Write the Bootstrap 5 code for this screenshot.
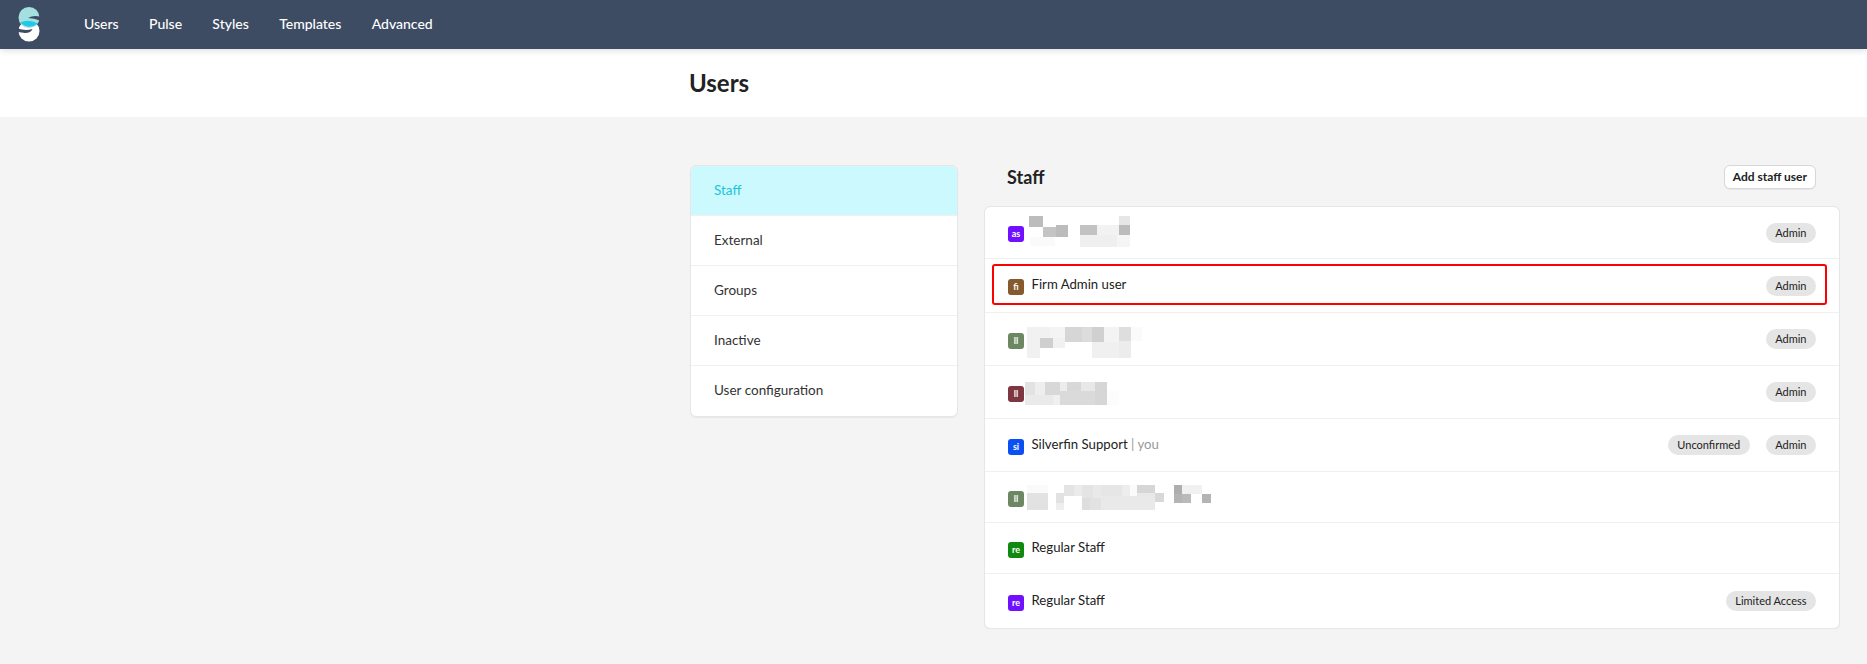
<!DOCTYPE html>
<html lang="en">
<head>
  <meta charset="UTF-8">
  <title>Users</title>
  <meta name="viewport" content="width=device-width, initial-scale=1">
  <link href="https://cdn.jsdelivr.net/npm/bootstrap@5.3.2/dist/css/bootstrap.min.css" rel="stylesheet">
  <style>
    body { font-family: Lato, "Liberation Sans", sans-serif; font-size: 14px; background: #f4f4f4; color: #222; }
    .top-bar { background: #3d4c63; height: 49px; padding: 0 0 0 18px; box-shadow: 0 2px 6px rgba(0,0,0,.12); position: relative; justify-content: flex-start; }
    .top-bar .navbar-brand { margin: 0 44px 0 0; padding: 0; display: flex; }
    .top-links { gap: 30.300px; flex-direction: row; margin-top: -2px; }
    .top-links .nav-link { color: #fff; font-size: 14px; font-weight: 500; padding: 0; }
    .page-head { background: #fff; height: 68px; padding-left: 689px; display: flex; align-items: center; }
    .page-head h1 { font-size: 24px; font-weight: 700; margin: 0; color: #222; }
    .page-body { padding: 48px 27px 0 690px; display: flex; gap: 26px; align-items: flex-start; }
    .side-menu { width: 268px; flex: none; border-radius: 6px; border: 1px solid #e6e6e6; box-shadow: 0 1px 1px rgba(0,0,0,.05); }
    .side-menu .list-group-item { height: 50px; padding: 0 23px 1px; display: flex; align-items: center; font-size: 13.500px; color: #333; border: 0; border-bottom: 1px solid #f0f0f0; background: #fff; }
    .side-menu .list-group-item:last-child { border-bottom: 0; }
    .side-menu .list-group-item.active { background: #ccf9fd; color: #1cc4dc; }
    .staff-col { flex: 1; min-width: 0; }
    .staff-head { height: 41px; padding: 0 24px 0 23px; display: flex; justify-content: space-between; align-items: flex-start; }
    .staff-head h2 { font-size: 18px; font-weight: 700; margin: 0; line-height: 24px; color: #222; }
    .add-btn { font-size: 12px; font-weight: 700; color: #222; background: #fff; border: 1px solid #d8d8d8; border-radius: 6px; padding: 0 8px; height: 24px; line-height: 22px; box-shadow: 0 1px 1px rgba(0,0,0,.06); }
    .staff-list { border: 1px solid #e6e6e6; border-radius: 6px; box-shadow: 0 1px 1px rgba(0,0,0,.05); }
    .staff-row { position: relative; display: flex; align-items: center; padding: 0 23px; height: 53px; border: 0; border-bottom: 1px solid #f0f0f0; font-size: 13.200px; color: #222; }
    .staff-row:last-child { border-bottom: 0; }
    .row-short { height: 51px; }
    .row-first { height: 52px; }
    .row-tall { height: 54px; }
    .row-last { height: 54px; }
    .avatar-tile { width: 16px; height: 16px; border-radius: 3px; color: #fff; font-size: 9px; font-weight: 700; line-height: 16px; text-align: center; margin-top: 3px; margin-right: 8px; flex: none; }
    .user-name { margin-top: -1px; margin-left: -.5px; }
    .you-note { color: #999; }
    .role-pill { background: #e5e5e5; color: #222; font-size: 11px; font-weight: 400; border-radius: 10px; height: 20px; line-height: 20px; padding: 0 9.500px; }
    .pill-set { margin-left: auto; gap: 16px; }
    .mosaic { display: block; flex: none; }
    .mosaic-as { margin: -3px 0 0 -3px; }
    .mosaic-l1 { margin: 6px 0 0 -5px; }
    .mosaic-l2 { margin: 2px 0 0 -7px; }
    .mosaic-l3 { margin: 0 0 0 -5px; }
    .marker-box { position: absolute; left: 7px; right: 12px; top: 5px; height: 41px; border: 2px solid #f00; border-radius: 3px; }
  </style>
</head>
<body>

<nav class="navbar top-bar">
  <a class="navbar-brand" href="#">
    <svg width="22" height="35" viewBox="0 0 22 35">
      <circle cx="11" cy="24" r="10.500" fill="#fff"/>
      <circle cx="11" cy="10.500" r="10.500" fill="#a4e0df"/>
      <path d="M2 15.500Q11 11.500 20 16.500Q11 23.500 2 15.500Z" fill="#22c8e8"/>
      <path d="M10 11Q15 8 22 9.500V13.500Q16 11 10 11Z" fill="#3d4c63"/>
      <path d="M0 21.500Q7 24 14.500 22Q13 26 7 26L0 25Z" fill="#3d4c63"/>
    </svg>
  </a>
  <ul class="navbar-nav top-links">
    <li class="nav-item"><a class="nav-link" href="#">Users</a></li>
    <li class="nav-item"><a class="nav-link" href="#">Pulse</a></li>
    <li class="nav-item"><a class="nav-link" href="#">Styles</a></li>
    <li class="nav-item"><a class="nav-link" href="#">Templates</a></li>
    <li class="nav-item"><a class="nav-link" href="#">Advanced</a></li>
  </ul>
</nav>

<header class="page-head">
  <h1>Users</h1>
</header>

<div class="page-body">
  <!-- left menu -->
  <div class="list-group side-menu">
    <a href="#" class="list-group-item active">Staff</a>
    <a href="#" class="list-group-item">External</a>
    <a href="#" class="list-group-item">Groups</a>
    <a href="#" class="list-group-item">Inactive</a>
    <a href="#" class="list-group-item">User configuration</a>
  </div>

  <!-- staff list -->
  <div class="staff-col">
    <div class="staff-head">
      <h2>Staff</h2>
      <button class="btn add-btn">Add staff user</button>
    </div>
    <div class="list-group staff-list">
      <div class="list-group-item staff-row row-first">
        <div class="avatar-tile" style="background:#6f10ff">as</div>
        <svg class="mosaic mosaic-as" width="101" height="31" viewBox="1029 215 101 31">
          <rect x="1029" y="215" width="14" height="11" fill="#bcbcbc"/>
          <rect x="1043" y="226" width="13" height="10" fill="#c4c4c4"/>
          <rect x="1056" y="224" width="12" height="12" fill="#bcbcbc"/>
          <rect x="1030" y="236" width="25" height="9" fill="#fafafa"/>
          <rect x="1080" y="224" width="17" height="10" fill="#c2c2c2"/>
          <rect x="1097" y="224" width="22" height="10" fill="#f2f2f2"/>
          <rect x="1080" y="234" width="37" height="12" fill="#efefef"/>
          <rect x="1119" y="215" width="11" height="9" fill="#e6e6e6"/>
          <rect x="1119" y="224" width="11" height="10" fill="#bcbcbc"/>
          <rect x="1117" y="234" width="13" height="12" fill="#f5f5f5"/>
        </svg>
        <div class="d-flex pill-set"><span class="badge role-pill">Admin</span></div>
      </div>
      <div class="list-group-item staff-row row-tall">
        <div class="avatar-tile" style="background:#845a2e">fi</div>
        <span class="user-name">Firm Admin user</span>
        <div class="d-flex pill-set"><span class="badge role-pill">Admin</span></div>
        <div class="marker-box"></div>
      </div>
      <div class="list-group-item staff-row">
        <div class="avatar-tile" style="background:#6d8763">ll</div>
        <svg class="mosaic mosaic-l1" width="115" height="31" viewBox="1027 326 115 31">
          <rect x="1027" y="326" width="23" height="11" fill="#f1f1f1"/>
          <rect x="1050" y="326" width="15" height="11" fill="#f4f4f4"/>
          <rect x="1027" y="337" width="13" height="20" fill="#f1f1f1"/>
          <rect x="1040" y="337" width="13" height="10" fill="#cfcfcf"/>
          <rect x="1053" y="337" width="12" height="10" fill="#f1f1f1"/>
          <rect x="1065" y="326" width="17" height="15" fill="#d6d6d6"/>
          <rect x="1082" y="326" width="10" height="15" fill="#dcdcdc"/>
          <rect x="1092" y="326" width="12" height="15" fill="#d0d0d0"/>
          <rect x="1104" y="326" width="15" height="15" fill="#f3f3f3"/>
          <rect x="1119" y="326" width="12" height="14" fill="#dedede"/>
          <rect x="1131" y="326" width="11" height="14" fill="#fbfbfb"/>
          <rect x="1092" y="341" width="27" height="16" fill="#f0f0f0"/>
          <rect x="1119" y="340" width="12" height="17" fill="#ececec"/>
        </svg>
        <div class="d-flex pill-set"><span class="badge role-pill">Admin</span></div>
      </div>
      <div class="list-group-item staff-row">
        <div class="avatar-tile" style="background:#7e3640">ll</div>
        <svg class="mosaic mosaic-l2" width="94" height="23" viewBox="1025 381 94 23">
          <rect x="1025" y="381" width="10" height="13" fill="#e2e2e2"/>
          <rect x="1035" y="381" width="10" height="13" fill="#eeeeee"/>
          <rect x="1045" y="381" width="15" height="13" fill="#d8d8d8"/>
          <rect x="1060" y="381" width="7" height="9" fill="#ececec"/>
          <rect x="1067" y="381" width="14" height="9" fill="#d8d8d8"/>
          <rect x="1081" y="381" width="14" height="9" fill="#e8e8e8"/>
          <rect x="1095" y="381" width="12" height="23" fill="#d6d6d6"/>
          <rect x="1025" y="394" width="28" height="10" fill="#eaeaea"/>
          <rect x="1053" y="394" width="7" height="10" fill="#f0f0f0"/>
          <rect x="1060" y="390" width="35" height="14" fill="#dadada"/>
          <rect x="1107" y="390" width="12" height="14" fill="#fcfcfc"/>
        </svg>
        <div class="d-flex pill-set"><span class="badge role-pill">Admin</span></div>
      </div>
      <div class="list-group-item staff-row">
        <div class="avatar-tile" style="background:#0b50f5">si</div>
        <span class="user-name">Silverfin Support <span class="you-note">| you</span></span>
        <div class="d-flex pill-set">
          <span class="badge role-pill">Unconfirmed</span>
          <span class="badge role-pill">Admin</span>
        </div>
      </div>
      <div class="list-group-item staff-row row-short">
        <div class="avatar-tile" style="background:#6d8763">ll</div>
        <svg class="mosaic mosaic-l3" width="184" height="25" viewBox="1027 484 184 25">
          <rect x="1027" y="484" width="21" height="8" fill="#fafafa"/>
          <rect x="1027" y="492" width="21" height="17" fill="#e2e2e2"/>
          <rect x="1056" y="492" width="8" height="10" fill="#e2e2e2"/>
          <rect x="1056" y="502" width="8" height="7" fill="#eeeeee"/>
          <rect x="1064" y="484" width="10" height="11" fill="#e4e4e4"/>
          <rect x="1074" y="484" width="8" height="11" fill="#ebebeb"/>
          <rect x="1082" y="484" width="11" height="13" fill="#e4e4e4"/>
          <rect x="1093" y="484" width="8" height="13" fill="#e9e9e9"/>
          <rect x="1101" y="484" width="21" height="11" fill="#e6e6e6"/>
          <rect x="1122" y="484" width="8" height="11" fill="#ededed"/>
          <rect x="1130" y="484" width="7" height="11" fill="#fbfbfb"/>
          <rect x="1137" y="484" width="18" height="8" fill="#d6d6d6"/>
          <rect x="1137" y="492" width="18" height="3" fill="#e8e8e8"/>
          <rect x="1082" y="497" width="8" height="12" fill="#dedede"/>
          <rect x="1090" y="497" width="11" height="12" fill="#e2e2e2"/>
          <rect x="1101" y="495" width="54" height="14" fill="#e9e9e9"/>
          <rect x="1155" y="492" width="9" height="9" fill="#d8d8d8"/>
          <rect x="1174" y="484" width="8" height="9" fill="#aeaeae"/>
          <rect x="1182" y="484" width="20" height="9" fill="#f1f1f1"/>
          <rect x="1174" y="493" width="8" height="9" fill="#b4b4b4"/>
          <rect x="1182" y="493" width="9" height="9" fill="#bababa"/>
          <rect x="1202" y="493" width="9" height="9" fill="#b4b4b4"/>
        </svg>
      </div>
      <div class="list-group-item staff-row row-short">
        <div class="avatar-tile" style="background:#0f8a0f">re</div>
        <span class="user-name">Regular Staff</span>
      </div>
      <div class="list-group-item staff-row row-last">
        <div class="avatar-tile" style="background:#6f10ff">re</div>
        <span class="user-name">Regular Staff</span>
        <div class="d-flex pill-set"><span class="badge role-pill">Limited Access</span></div>
      </div>
    </div>
  </div>
</div>

<script src="https://cdn.jsdelivr.net/npm/bootstrap@5.3.2/dist/js/bootstrap.bundle.min.js"></script>
</body>
</html>
